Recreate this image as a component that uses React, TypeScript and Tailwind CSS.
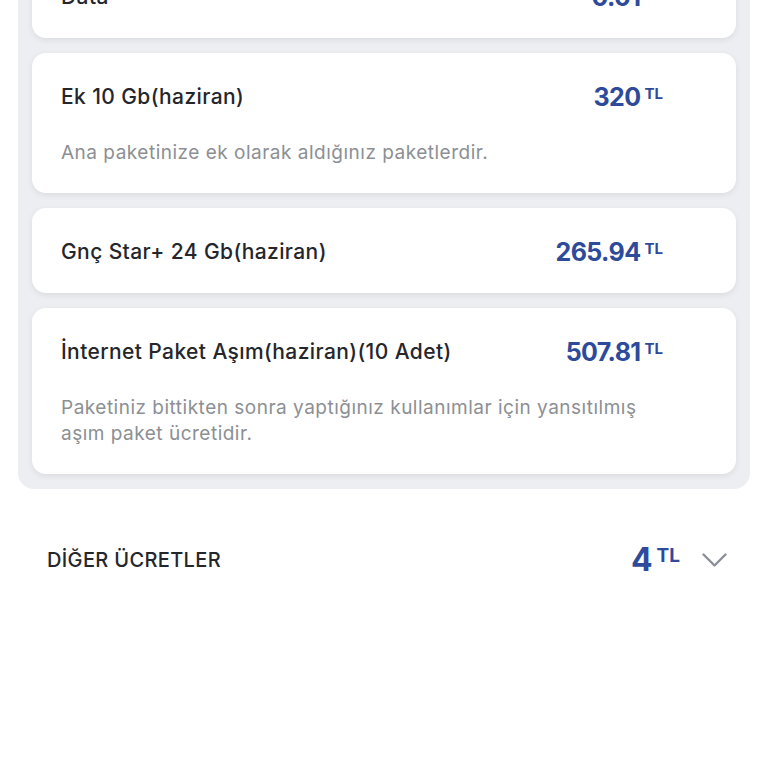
type Item = {
  title: string;
  price: string;
  note?: string;
};

const items: Item[] = [
  { title: "Ek 10 Gb(haziran)", price: "320", note: "Ana paketinize ek olarak aldığınız paketlerdir." },
  { title: "Gnç Star+ 24 Gb(haziran)", price: "265.94" },
  {
    title: "İnternet Paket Aşım(haziran)(10 Adet)",
    price: "507.81",
    note: "Paketiniz bittikten sonra yaptığınız kullanımlar için yansıtılmış aşım paket ücretidir.",
  },
];

function Price({ value }: { value: string }) {
  return (
    <div className="flex items-start shrink-0 text-[#2d4a9b] font-bold">
      <span className="text-[25px] leading-[28px] tracking-[-0.6px]">{value}</span>
      <span className="ml-[4px] mt-[2px] text-[15px] leading-[18px]">TL</span>
    </div>
  );
}

function Card({ item }: { item: Item }) {
  return (
    <div className="bg-white rounded-[14px] shadow-[0_2px_6px_rgba(0,0,0,0.08)] pl-[29px] pr-[73px] pt-[30px] pb-[27px]">
      <div className="flex items-center justify-between gap-4">
        <span className="text-[21px] leading-[28px] font-medium text-[#24262b] tracking-[0.4px]">{item.title}</span>
        <Price value={item.price} />
      </div>
      {item.note && (
        <p className="mt-[29px] text-[19px] leading-[26px] text-[#8c8f94] tracking-[0.5px]">{item.note}</p>
      )}
    </div>
  );
}

export default function App() {
  return (
    <div
      className="w-full h-[768px] overflow-hidden bg-white"
      style={{ fontFamily: "Inter, 'Noto Sans', sans-serif" }}
    >
      <div className="mx-[18px] -mt-[62px] bg-[#eceef2] rounded-b-[16px] px-[14px] pt-[15px] pb-[15px] flex flex-col gap-[15px]">
        <Card item={{ title: "Data", price: "0.01" }} />
        {items.map((it) => (
          <Card key={it.title} item={it} />
        ))}
      </div>

      <div className="flex items-center justify-between pl-[47px] pr-[41px] mt-[53px]">
        <span className="text-[20px] leading-[28px] font-medium text-[#24262b] tracking-[0.35px]">DİĞER ÜCRETLER</span>
        <div className="flex items-center">
          <div className="flex items-start text-[#2d4a9b] font-bold">
            <span className="text-[32px] leading-[36px]">4</span>
            <span className="ml-[4px] mt-[3px] text-[19px] leading-[22px]">TL</span>
          </div>
          <svg className="ml-[22px]" width="25" height="15" viewBox="0 0 25 15" fill="none">
            <polyline points="1.5,1.5 12.5,12.5 23.5,1.5" stroke="#8a8f99" strokeWidth="2.4" strokeLinecap="round" strokeLinejoin="round" />
          </svg>
        </div>
      </div>
    </div>
  );
}
